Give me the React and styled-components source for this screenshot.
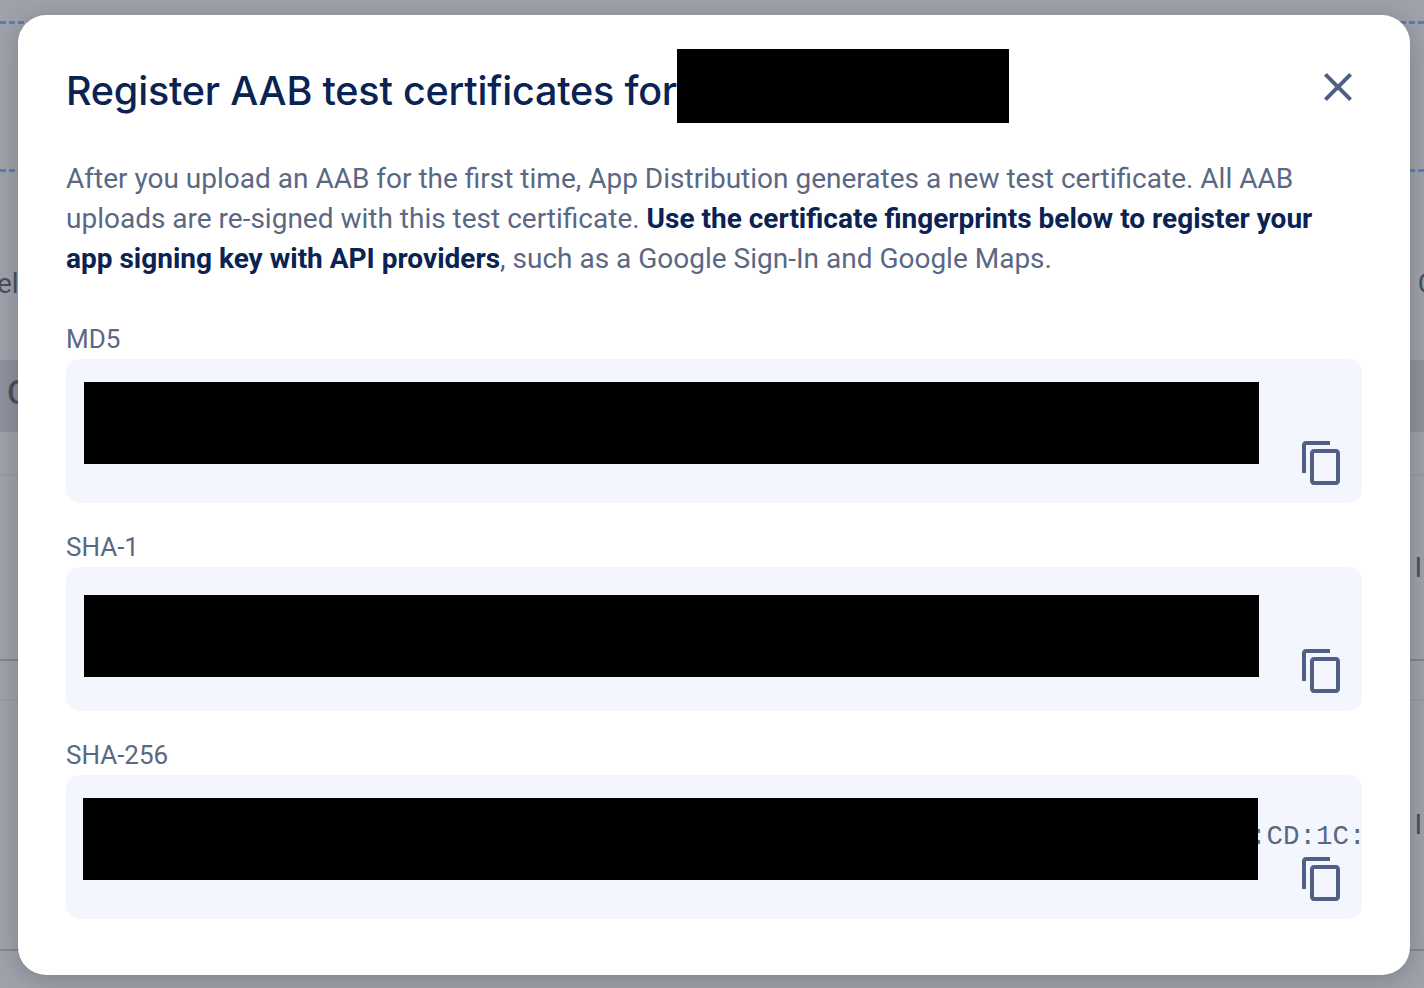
import styled, { createGlobalStyle } from "styled-components";

const GlobalStyle = createGlobalStyle`
  html, body {
    margin: 0;
    padding: 0;
    height: 100%;
    overflow: hidden;
  }
  body {
    font-family: Roboto, "Liberation Sans", sans-serif;
  }
`;

const Page = styled.div`
  position: relative;
  width: 1424px;
  height: 988px;
  overflow: hidden;
  background: #9fa2aa;
`;

const Backdrop = styled.div`
  display: flex;
  flex-direction: column;
  height: 100%;
  color: #4a4f5c;
  font-size: 28px;
`;

const DashLine = styled.div`
  margin-top: ${(p) => p.$top}px;
  height: 0;
  border-top: 3px dashed #5f7db4;
`;

const BackRow = styled.div`
  display: flex;
  align-items: center;
  justify-content: space-between;
  height: ${(p) => p.$height}px;
  margin-top: ${(p) => p.$top || 0}px;
  background: ${(p) => p.$bg || "transparent"};
  border-bottom: ${(p) => (p.$line ? `2px solid ${p.$line}` : "none")};
`;

const BackText = styled.span`
  margin: ${(p) => p.$margin};
  font-size: ${(p) => p.$size || 28}px;
  font-weight: ${(p) => p.$weight || 400};
  line-height: 1;
`;

const Modal = styled.div`
  position: absolute;
  left: 18px;
  top: 15px;
  width: 1392px;
  height: 960px;
  box-sizing: border-box;
  padding: 34px 48px 56px;
  background: #fff;
  border-radius: 28px;
  box-shadow: 0 4px 24px rgba(40, 44, 60, 0.28);
`;

const Header = styled.div`
  display: flex;
  align-items: flex-start;
  justify-content: space-between;
  height: 74px;
`;

const Title = styled.h2`
  display: flex;
  align-items: center;
  margin: 0;
  height: 74px;
  font-family: Inter, sans-serif;
  font-size: 39.5px;
  font-weight: 500;
  letter-spacing: -0.2px;
  color: #0a2352;
  white-space: nowrap;
`;

const TitleText = styled.span`
  padding-top: 10px;
`;

const TitleRedaction = styled.span`
  display: block;
  flex: none;
  width: 332px;
  height: 74px;
  background: #000;
`;

const IconButton = styled.button`
  display: flex;
  padding: 0;
  margin: 14px 0 0;
  border: 0;
  background: none;
  color: #4f5f85;
  cursor: pointer;
`;

const Intro = styled.p`
  margin: 36px 0 45px;
  font-size: 28px;
  line-height: 40px;
  color: #5a6884;
  strong {
    font-weight: 700;
    color: #0a2352;
  }
`;

const Fields = styled.div`
  display: flex;
  flex-direction: column;
  gap: 29px;
`;

const Label = styled.div`
  height: 30px;
  margin-bottom: 5px;
  font-size: 26px;
  line-height: 30px;
  color: #5a6884;
`;

const Card = styled.div`
  display: flex;
  justify-content: space-between;
  height: 144px;
  border-radius: 14px;
  background: #f4f6fd;
`;

const Redaction = styled.div`
  position: relative;
  z-index: 1;
  flex: none;
  width: 1175px;
  height: 82px;
  margin: ${(p) => p.$top}px 0 0 ${(p) => p.$left}px;
  background: #000;
`;

const ValueColumn = styled.div`
  display: flex;
  flex-direction: column;
  justify-content: flex-end;
  align-items: flex-end;
  flex: 1;
  min-width: 0;
  padding: 0 16px 16px 0;
`;

const Value = styled.div`
  margin: 0 -16px 3px -8px;
  align-self: flex-start;
  font-family: "Liberation Mono", monospace;
  font-size: 27.5px;
  line-height: 30px;
  color: #5a6884;
  white-space: nowrap;
`;

const CopyButton = styled.button`
  display: flex;
  padding: 0;
  border: 0;
  background: none;
  color: #4f5f85;
  cursor: pointer;
`;

const CloseIcon = () => (
  <svg width="48" height="48" viewBox="0 0 24 24" fill="currentColor">
    <path d="M19 6.41 17.59 5 12 10.59 6.41 5 5 6.41 10.59 12 5 17.59 6.41 19 12 13.41 17.59 19 19 17.59 13.41 12z" />
  </svg>
);

const CopyIcon = () => (
  <svg width="48" height="48" viewBox="0 0 24 24" fill="currentColor">
    <path d="M16 1H4c-1.1 0-2 .9-2 2v14h2V3h12V1zm3 4H8c-1.1 0-2 .9-2 2v14c0 1.1.9 2 2 2h11c1.1 0 2-.9 2-2V7c0-1.1-.9-2-2-2zm0 16H8V7h11v14z" />
  </svg>
);

const fields = [
  { label: "MD5", top: 23, left: 18 },
  { label: "SHA-1", top: 28, left: 18 },
  { label: "SHA-256", top: 23, left: 17, value: ":CD:1C:" },
];

export default function App() {
  return (
    <Page>
      <GlobalStyle />
      <Backdrop>
        <DashLine $top={21} />
        <DashLine $top={145} />
        <BackRow $top={89} $height={45}>
          <BackText $margin="0 0 0 -3px">el</BackText>
          <BackText $margin="0 -12px 0 0">C</BackText>
        </BackRow>
        <BackRow $top={54} $height={72} $bg="#8f929c">
          <BackText $margin="-8px 0 0 7px" $size={34} $weight={500}>
            C
          </BackText>
        </BackRow>
        <BackRow $top={41} $height={1} $line="#979aa3" />
        <BackRow $height={183} $line="#81848d">
          <span />
          <BackText $margin="0 2px 0 0">I</BackText>
        </BackRow>
        <BackRow $top={37} $height={1} $line="#979aa3" />
        <BackRow $height={248} $line="#85888f">
          <span />
          <BackText $margin="0 2px 0 0">I</BackText>
        </BackRow>
      </Backdrop>
      <Modal>
        <Header>
          <Title>
            <TitleText>Register AAB test certificates for</TitleText>
            <TitleRedaction />
          </Title>
          <IconButton aria-label="Close">
            <CloseIcon />
          </IconButton>
        </Header>
        <Intro>
          After you upload an AAB for the first time, App Distribution generates
          a new test certificate. All AAB uploads are re-signed with this test
          certificate.{" "}
          <strong>
            Use the certificate fingerprints below to register your app signing
            key with API providers
          </strong>
          , such as a Google Sign-In and Google Maps.
        </Intro>
        <Fields>
          {fields.map((field) => (
            <div key={field.label}>
              <Label>{field.label}</Label>
              <Card>
                <Redaction $top={field.top} $left={field.left} />
                <ValueColumn>
                  {field.value && <Value>{field.value}</Value>}
                  <CopyButton aria-label={`Copy ${field.label}`}>
                    <CopyIcon />
                  </CopyButton>
                </ValueColumn>
              </Card>
            </div>
          ))}
        </Fields>
      </Modal>
    </Page>
  );
}
